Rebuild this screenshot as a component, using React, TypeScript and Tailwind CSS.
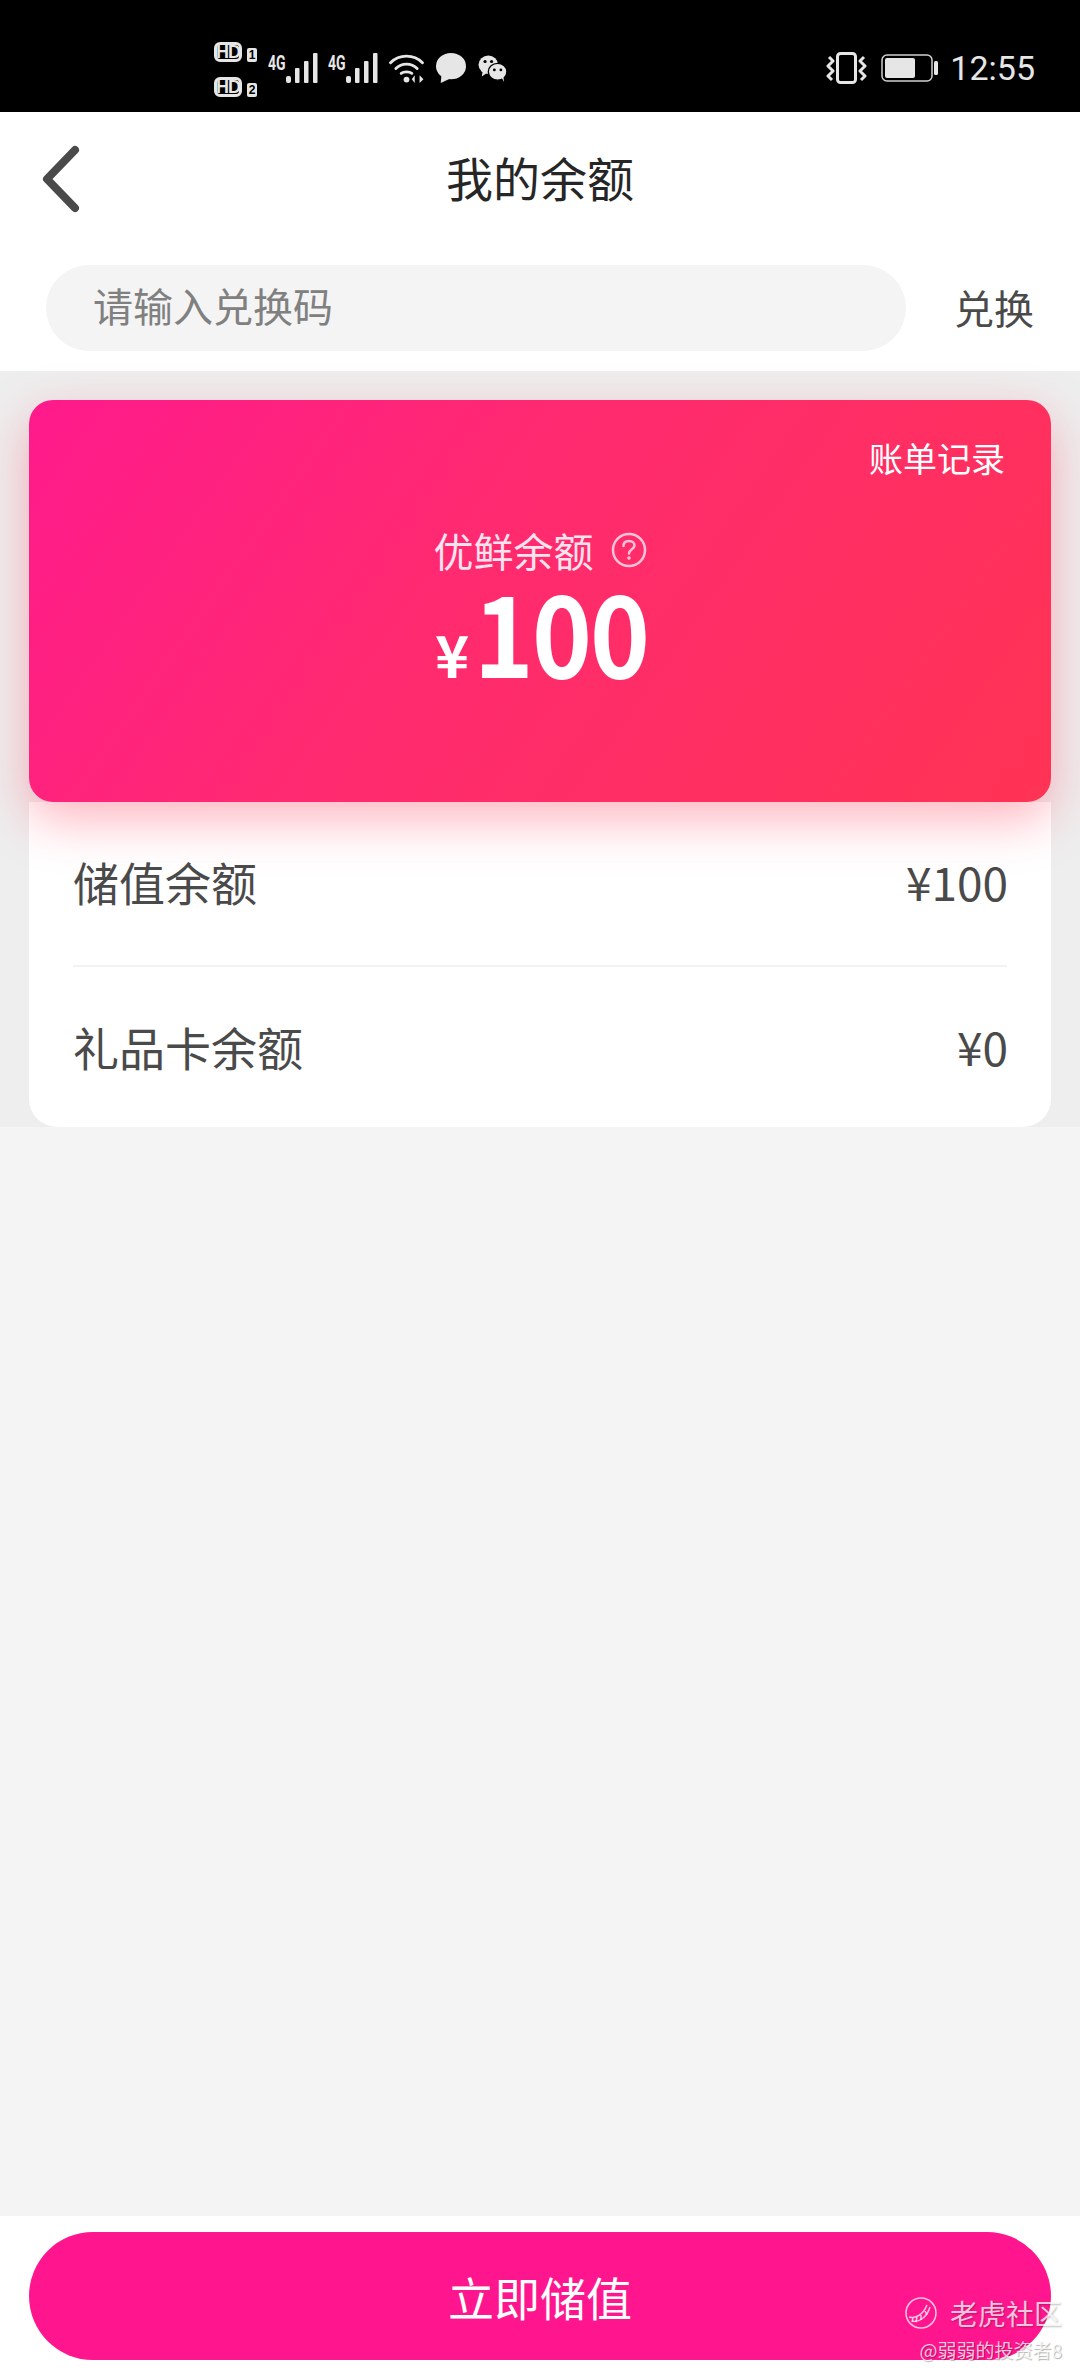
const FONT = "font-['Noto_Sans_CJK_SC','Noto_Sans',sans-serif]";

function HdBadge({ n }: { n: string }) {
  return (
    <div className="flex items-end gap-[5px]">
      <div className="flex h-[20px] w-[28px] items-center justify-center rounded-[6px] border-[3px] border-[#e6e6e6] font-['Liberation_Sans',sans-serif] text-[18px] leading-none font-bold tracking-[-1px] text-[#e6e6e6]">HD</div>
      <div className="flex h-[14px] w-[10px] items-center justify-center rounded-[2px] bg-[#e6e6e6] font-['Liberation_Sans',sans-serif] text-[12px] leading-none font-bold text-black">{n}</div>
    </div>
  );
}

function Signal() {
  return (
    <div className="relative flex h-[30px] w-[50px] items-end justify-end">
      <span className="absolute top-[0px] left-0 origin-top-left scale-x-[0.7] font-['Roboto',sans-serif] text-[20px] leading-none font-bold text-[#e6e6e6]">4G</span>
      <svg width="32" height="30" viewBox="0 0 32 30" fill="#e6e6e6">
        <rect x="0" y="23" width="5" height="7" rx="2" />
        <rect x="9" y="15" width="4.5" height="15" rx="1" />
        <rect x="18" y="8" width="4.5" height="22" rx="1" />
        <rect x="27" y="0" width="4.5" height="30" rx="1" />
      </svg>
    </div>
  );
}

function StatusBar() {
  return (
    <div className="flex h-[112px] items-start bg-black pl-[214px] pr-[45px]">
      <div className="flex flex-col gap-[15px] pt-[42px]">
        <HdBadge n="1" />
        <HdBadge n="2" />
      </div>
      <div className="ml-[11px] flex items-start gap-[10px] pt-[53px]">
        <Signal />
        <Signal />
        <svg width="37" height="30" viewBox="0 0 37 31" fill="none" stroke="#e6e6e6" strokeLinecap="round" strokeWidth="3">
          <path d="M2 10C11 1 26 1 35 10" />
          <path d="M7.5 16C13.5 10 23.5 10 29.5 16" />
          <path d="M13 21C15.5 19 21.5 19 24 21" />
          <circle cx="18.5" cy="27.5" r="3" fill="#e6e6e6" stroke="none" />
          <path d="M27 23L27 31L24 27ZM32 23L32 31L36 27Z" fill="#e6e6e6" stroke="none" />
        </svg>
        <svg width="32" height="30" viewBox="0 0 32 32" fill="#e6e6e6">
          <ellipse cx="16" cy="14" rx="16" ry="14" />
          <path d="M6 22L5 32L16 27Z" />
        </svg>
        <svg width="31" height="27" viewBox="0 0 31 29" className="mt-[2px]">
          <ellipse cx="11" cy="10.5" rx="10.5" ry="10" fill="#e6e6e6" />
          <path d="M5 17L4 23L10 19Z" fill="#e6e6e6" />
          <circle cx="7.5" cy="7" r="1.7" fill="#000" />
          <circle cx="14.5" cy="7" r="1.7" fill="#000" />
          <ellipse cx="21" cy="18" rx="10" ry="9" fill="#e6e6e6" stroke="#000" strokeWidth="1.5" />
          <path d="M25 24L28 29L27 22Z" fill="#e6e6e6" />
          <circle cx="17.5" cy="16" r="1.5" fill="#000" />
          <circle cx="24.5" cy="16" r="1.5" fill="#000" />
        </svg>
      </div>
      <div className="ml-auto flex items-center pt-[51px]">
        <svg width="41" height="32" viewBox="0 0 41 32" fill="none" stroke="#e6e6e6" strokeWidth="3">
          <rect x="11.5" y="1.5" width="18" height="29" rx="3" />
          <path d="M3 5L7 9L2 14L7 19L2 24L6 28" strokeLinejoin="round" />
          <path d="M38 5L34 9L39 14L34 19L39 24L35 28" strokeLinejoin="round" />
        </svg>
        <svg width="57" height="28" viewBox="0 0 57 28" className="ml-[14px]">
          <rect x="1" y="1" width="50" height="26" rx="5" fill="none" stroke="#cfcfcf" strokeWidth="1.5" />
          <rect x="4" y="4" width="30" height="20" rx="2" fill="#e6e6e6" />
          <rect x="53" y="7" width="4" height="14" rx="1.5" fill="#e6e6e6" />
        </svg>
        <span className="ml-[12px] font-['Roboto',sans-serif] text-[34px] leading-none font-normal text-[#e6e6e6]">12:55</span>
      </div>
    </div>
  );
}

function Row({ label, value, className }: { label: string; value: string; className?: string }) {
  return (
    <div className={`flex flex-1 items-center justify-between pl-[44px] pr-[43px] ${className ?? ""}`}>
      <span className="text-[46px] leading-none text-[#4a4a4a]">{label}</span>
      <span className="text-[46px] leading-none text-[#4a4a4a]">{value}</span>
    </div>
  );
}

export default function App() {
  return (
    <div className={`relative flex h-[2376px] w-[1080px] flex-col overflow-hidden bg-[#f4f4f4] ${FONT}`}>
      <StatusBar />

      <div className="relative flex h-[133px] items-center justify-center bg-white pb-[4px]">
        <svg width="46" height="68" viewBox="0 0 46 68" fill="none" stroke="#4a4a4a" strokeWidth="8" strokeLinecap="round" strokeLinejoin="round" className="absolute top-[33px] left-[39px]">
          <path d="M36 5L8 34L36 63" />
        </svg>
        <h1 className="text-[47px] leading-none font-normal text-[#262626]">我的余额</h1>
      </div>

      <div className="flex h-[126px] items-start bg-white pt-[20px] pl-[46px] pr-[46px]">
        <div className="flex h-[86px] w-[860px] items-center rounded-full bg-[#f4f4f4] pb-[6px] pl-[47px] text-[40px] leading-none text-[#808080]">请输入兑换码</div>
        <span className="ml-auto pt-[22px] text-[40px] leading-none text-[#4a4a4a]">兑换</span>
      </div>

      <div className="bg-[#eeeeee] px-[29px] pt-[29px]">
        <div className="relative z-10 flex h-[402px] flex-col rounded-[24px] bg-[linear-gradient(125deg,#ff1a8c_0%,#ff2a70_42%,#ff3354_100%)] shadow-[0_18px_50px_rgba(255,60,90,0.38)]">
          <div className="self-end pt-[40px] pr-[46px] text-[34px] leading-[36px] text-white">账单记录</div>
          <div className="mt-[50px] flex items-center justify-center">
            <span className="text-[40px] leading-[48px] text-[#ffe3ee]">优鲜余额</span>
            <svg width="36" height="36" viewBox="0 0 36 36" fill="none" stroke="#ffc4d8" strokeWidth="2.5" className="ml-[17px]">
              <circle cx="18" cy="18" r="16" />
              <path d="M12.5 14C12.5 10.5 15 9 18 9C21 9 23.5 11 23.5 13.5C23.5 17 18 17.5 18 21.5" strokeLinecap="round" />
              <circle cx="18" cy="26" r="1.8" fill="#ffc4d8" stroke="none" />
            </svg>
          </div>
          <div className="mt-[5px] flex items-baseline justify-center pl-[8px] leading-none font-bold text-white">
            <span className="text-[58px] leading-[100px]">¥</span>
            <span className="mr-[-5px] ml-[-5px] inline-block scale-x-[0.9] text-[113px] leading-[100px] tracking-[-2px]">100</span>
          </div>
        </div>
        <div className="flex h-[325px] flex-col rounded-b-[28px] bg-white">
          <div className="flex h-[163px] flex-col"><Row label="储值余额" value="¥100" className="pb-[5px]" /></div>
          <div className="mx-[44px] h-[2px] bg-[#f2f2f2]" />
          <div className="flex flex-1 flex-col pb-[2px]"><Row label="礼品卡余额" value="¥0" /></div>
        </div>
      </div>

      <div className="flex-1" />

      <div className="flex h-[160px] items-start bg-white px-[29px] pt-[16px]">
        <div className="flex h-[128px] w-full items-center justify-center rounded-full bg-[#ff168e] text-[46px] leading-none text-white">立即储值</div>
      </div>

      <div className="absolute right-[18px] bottom-[17px] flex flex-col items-end">
        <div className="flex items-center gap-[13px]">
          <svg width="32" height="32" viewBox="0 0 32 32" fill="none" stroke="#ffffff" strokeOpacity="0.75" strokeWidth="1.5">
            <circle cx="16" cy="16" r="15" />
            <path d="M4 20C10 22 18 18 22 8M7 24C14 26 22 20 25 10" />
            <path d="M8 21L7 25M12 20L11 25M16 18L16 23M20 14L22 18" />
          </svg>
          <span className="text-[28px] leading-none text-white/75 [text-shadow:1px_1px_2px_rgba(0,0,0,0.25)]">老虎社区</span>
        </div>
        <span className="mt-[11px] text-[19px] leading-none text-white/75 [text-shadow:1px_1px_1px_rgba(0,0,0,0.3)]">@弱弱的投资者8</span>
      </div>
    </div>
  );
}
